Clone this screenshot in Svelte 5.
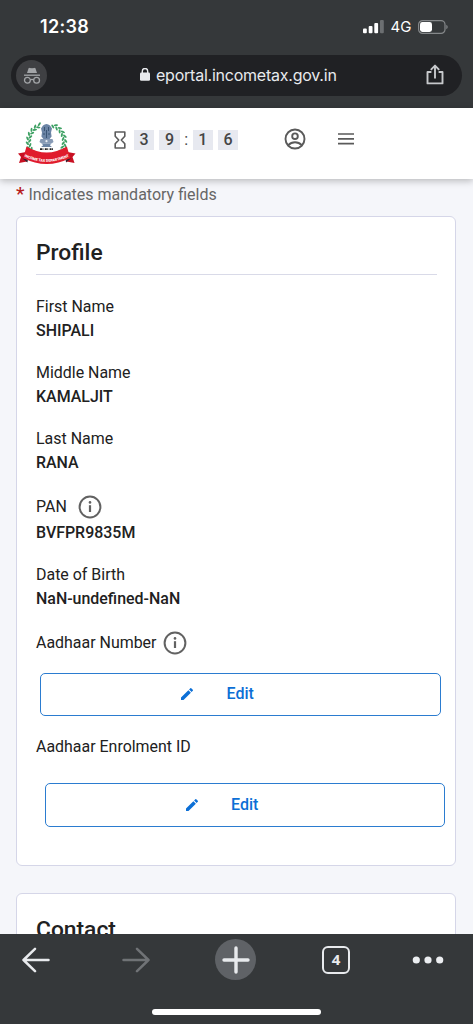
<script>
  const timer = ['3', '9', ':', '1', '6'];
  const fields = [
    { label: 'First Name', value: 'SHIPALI' },
    { label: 'Middle Name', value: 'KAMALJIT' },
    { label: 'Last Name', value: 'RANA' },
    { label: 'PAN', value: 'BVFPR9835M', info: true, wide: true },
    { label: 'Date of Birth', value: 'NaN-undefined-NaN' },
    { label: 'Aadhaar Number', info: true },
  ];
  const wreath = Array.from({ length: 44 }, (_, i) => {
    const deg = -68 + i * 7.35;
    const r = (deg * Math.PI) / 180;
    const d = i % 2 ? 1.2 : -1.2;
    return { x: 28.5 + (18 + d) * Math.cos(r), y: 19.5 + (17.4 + d) * Math.sin(r), deg: deg + (i % 2 ? 55 : 125) };
  });
</script>

{#snippet infoIcon()}
  <svg class="info" width="24" height="24" viewBox="0 0 24 24" fill="none">
    <circle cx="12" cy="12" r="10.4" stroke="#626262" stroke-width="2" />
    <path d="M12 10.2v6.8" stroke="#626262" stroke-width="2.2" />
    <circle cx="12" cy="7.4" r="1.3" fill="#626262" />
  </svg>
{/snippet}

{#snippet editButton(extra)}
  <button class="edit {extra}">
    <svg width="16" height="16" viewBox="0 0 24 24" fill="#0c6fd6">
      <path d="M3 17.25V21h3.75L17.81 9.94l-3.75-3.75zM20.71 7.04a1 1 0 0 0 0-1.41l-2.34-2.34a1 1 0 0 0-1.41 0l-1.83 1.83 3.75 3.75z" />
    </svg>
    <span>Edit</span>
  </button>
{/snippet}

<div class="screen">
  <header class="browser">
    <div class="status">
      <span class="clock">12:38</span>
      <div class="signals">
        <svg width="21" height="14" viewBox="0 0 21 14" fill="#fff">
          <rect x="0" y="8.5" width="3.8" height="4.7" rx="1" />
          <rect x="5.7" y="6" width="3.8" height="7.2" rx="1" />
          <rect x="11.3" y="3" width="3.8" height="10.2" rx="1" />
          <rect x="17" y="0" width="3.8" height="13.2" rx="1" fill="#6c6f71" />
        </svg>
        <span class="net">4G</span>
        <svg width="30" height="14" viewBox="0 0 30 14">
          <rect x=".6" y=".6" width="26.4" height="12.8" rx="4" fill="none" stroke="#85888a" stroke-width="1.2" />
          <rect x="2" y="2" width="12" height="10" rx="2.4" fill="#fff" />
          <path d="M28.3 4.8q1.4.9 1.4 2.2t-1.4 2.2z" fill="#85888a" />
        </svg>
      </div>
    </div>
    <div class="address">
      <span class="incognito">
        <svg width="18" height="18" viewBox="0 0 18 18" fill="none" stroke="#a3a5a8">
          <path d="M4 6 5.5 1.4Q5.8.7 6.5.9L9 1.3l2.5-.4q.7-.2 1 .5L14 6z" fill="#a3a5a8" stroke="none" />
          <path d="M1 8.2h16" stroke-width="1.3" />
          <circle cx="4.4" cy="13.2" r="2.9" stroke-width="1.3" />
          <circle cx="13.6" cy="13.2" r="2.9" stroke-width="1.3" />
          <path d="M7.2 13q1.8-1.1 3.6 0" stroke-width="1.2" />
        </svg>
      </span>
      <div class="url">
        <svg width="10" height="13" viewBox="0 0 10 13">
          <rect x="0" y="4.5" width="10" height="8.2" rx="1.2" fill="#e8eaed" />
          <path d="M2.3 5V3.2a2.7 2.7 0 0 1 5.4 0V5" fill="none" stroke="#e8eaed" stroke-width="1.4" />
        </svg>
        <span>eportal.incometax.gov.in</span>
      </div>
      <svg class="share" width="18" height="22" viewBox="0 0 18 22" fill="none" stroke="#c7c9cc" stroke-width="1.9">
        <path d="M5.4 8H1.5v11.4h15V8h-3.9M9 14.4V2M4.8 5.8 9 1.6l4.2 4.2" stroke-linejoin="round" />
      </svg>
    </div>
  </header>

  <nav class="site">
    <svg class="logo" width="58" height="44" viewBox="0 0 58 44">
      {#each wreath as l}
        <ellipse cx={l.x} cy={l.y} rx="2.2" ry="1" fill="#3fa164" transform={`rotate(${l.deg} ${l.x} ${l.y})`} />
      {/each}
      <g fill="#6b84a5">
        <path d="M25 3.5q3.5-3 7 0l2 3-1 4 .6 4-2 2.500h-6.200l-2-2.500.6-4-1-4z" />
        <path d="M22.500 17h12l1 3-2 1.500H23.500l-2-1.500z" fill="#879ab5" />
        <path d="M24 21.500h9l-1 2 2 1.400H23l2-1.400z" />
      </g>
      <path d="M26.500 5v4m4-4v4M25 12h2m3 0h2M28.500 8v8" stroke="#34506f" stroke-width=".9" />
      <circle cx="28.500" cy="19.200" r="1.100" fill="#e9eef5" />
      <path d="M22 27.200h3.400m1.400 0h3.400m1.400 0h3.400" stroke="#222" stroke-width="1.700" stroke-dasharray="2 .5" />
      <path d="M8 30 0 31.500l3 3.400L1 41l8-1.400zM49.500 30l8 1.500-3 3.400 2 6.100-8-1.400z" fill="#c81022" />
      <path d="M4.500 36.500l5.500 1-.6 3zM53 36.500l-5.500 1 .6 3z" fill="#3a2230" />
      <path d="M8.500 24.500q20.200 12 40.400 0l3.300 11.500q-23.500 12-47 0z" fill="#e01b2c" />
      <path id="ribbon" d="M6.500 34.600q22 10.400 44.400 0" fill="none" />
      <text class="ribbon-text" text-anchor="middle"><textPath href="#ribbon" startOffset="50%">INCOME TAX DEPARTMENT</textPath></text>
    </svg>
    <div class="timer">
      <svg width="12" height="18" viewBox="0 0 12 18" fill="none" stroke="#5c5c5c" stroke-width="1.6" stroke-linejoin="round">
        <path d="M1.200 1h9.600v4.200L7.300 9l3.500 3.800V17H1.200v-4.200L4.700 9 1.200 5.200z" />
      </svg>
      <div class="digits">
        {#each timer as t}
          <span class:colon={t === ':'}>{t}</span>
        {/each}
      </div>
    </div>
    <svg class="user" width="22" height="22" viewBox="0 0 22 22" fill="none" stroke="#5a5a5a" stroke-width="1.900">
      <circle cx="11" cy="11" r="9.500" />
      <circle cx="11" cy="8.200" r="2.800" />
      <path d="M4.300 17.200q2.700-2.900 6.700-2.900t6.700 2.900" />
    </svg>
    <svg class="menu" width="16" height="12" viewBox="0 0 16 12" stroke="#5a5a5a" stroke-width="1.700">
      <path d="M0 1h16M0 5.800h16M0 10.600h16" />
    </svg>
  </nav>

  <main>
    <p class="mandatory"><b>*</b> Indicates mandatory fields</p>
    <section class="card profile">
      <h2>Profile</h2>
      {#each fields as f}
        <div class="field">
          <div class="label" class:tall={f.info} class:wide={f.wide}>
            <span>{f.label}</span>
            {#if f.info}{@render infoIcon()}{/if}
          </div>
          {#if f.value}<div class="value">{f.value}</div>{/if}
        </div>
      {/each}
      {@render editButton('first')}
      <div class="label enrol">Aadhaar Enrolment ID</div>
      {@render editButton('second')}
    </section>
    <section class="card contact">
      <h2>Contact</h2>
    </section>
  </main>

  <footer>
    <div class="tools">
      <svg width="28" height="26" viewBox="0 0 28 26" fill="none" stroke="#e8eaed" stroke-width="2.500" stroke-linecap="round" stroke-linejoin="round">
        <path d="M26.500 13H1.500M13 1.800 1.500 13 13 24.200" />
      </svg>
      <svg class="forward" width="28" height="26" viewBox="0 0 28 26" fill="none" stroke="#707376" stroke-width="2.500" stroke-linecap="round" stroke-linejoin="round">
        <path d="M1.500 13h25M15 1.800 26.500 13 15 24.200" />
      </svg>
      <span class="plus">
        <svg width="28" height="28" viewBox="0 0 28 28" stroke="#e8eaed" stroke-width="3.400" stroke-linecap="round">
          <path d="M14 2v24M2 14h24" />
        </svg>
      </span>
      <span class="tabs">4</span>
      <svg class="more" width="32" height="8" viewBox="0 0 32 8" fill="#eceef1">
        <circle cx="4.300" cy="4" r="3.600" /><circle cx="16" cy="4" r="3.600" /><circle cx="27.700" cy="4" r="3.600" />
      </svg>
    </div>
    <div class="home"></div>
  </footer>
</div>

<style>
  :global(body) { margin: 0; background: #35383a; }
  .screen {
    width: 473px; height: 1024px; overflow: hidden;
    display: flex; flex-direction: column;
    font-family: Roboto, sans-serif; color: #212121; background: #f5f6fa;
  }
  .screen * { box-sizing: border-box; }
  svg { display: block; flex: none; }
  .browser { height: 108px; flex: none; background: #35383a; padding: 0 11px; }
  .status {
    height: 55px; padding: 0 14px 2px 29px; display: flex; justify-content: space-between; align-items: center;
    color: #fff; font-family: Inter, sans-serif;
  }
  .clock { font-size: 18px; font-weight: 600; line-height: 22px; letter-spacing: .3px; }
  .signals { display: flex; align-items: center; }
  .net { font-size: 15px; font-weight: 400; line-height: 20px; width: 34px; text-align: center; }
  .address {
    height: 41px; border-radius: 21px; background: #202124; display: flex; align-items: center;
    padding: 0 18px 0 5px; color: #e8eaed;
  }
  .incognito {
    width: 31px; height: 31px; border-radius: 50%; background: #3f4043;
    display: flex; align-items: center; justify-content: center;
  }
  .url {
    margin: -2px 0 0 93px; display: flex; align-items: center; gap: 6px;
    font: 400 16px/20px Inter, sans-serif; letter-spacing: -.23px;
  }
  .share { margin: -1px 0 0 auto; }

  .site {
    height: 71px; flex: none; background: #fff; position: relative; z-index: 1;
    box-shadow: 0 2px 7px rgba(0, 0, 0, .25); display: flex; align-items: flex-start; padding-left: 18px;
  }
  .logo { margin-top: 14px; }
  .ribbon-text { font-family: Roboto, sans-serif; font-size: 3.700px; font-weight: 900; fill: #fff; }
  .timer { margin: 22px 0 0 38px; display: flex; align-items: center; }
  .digits { display: flex; gap: 5px; margin-left: 8px; }
  .digits span {
    width: 20.300px; height: 20px; background: #e7e9f0; color: #454545;
    font-size: 16px; font-weight: 500; line-height: 20px; text-align: center;
  }
  .digits .colon { width: 3px; background: none; font-weight: 400; display: flex; justify-content: center; }
  .user { margin: 19.500px 0 0 45.800px; }
  .menu { margin: 25px 0 0 32px; }

  main { flex: 1; min-height: 0; overflow: hidden; padding: 0 17px 0 16px; }
  .mandatory { margin: 6px 0 0; font-size: 16px; line-height: 20px; color: #666; }
  .mandatory b { font-weight: 500; font-size: 19px; line-height: 16px; color: #b71c1c; }
  .card { background: #fff; border: 1.500px solid #d5d6e8; border-radius: 6px; padding: 0 18px 0 19px; }
  .profile { margin-top: 11px; height: 650px; }
  .contact { margin-top: 27px; height: 300px; }
  h2 {
    margin: 0 0 20px; padding-top: 20px; height: 58px; border-bottom: 1px solid #d9dae8;
    font-size: 22.800px; font-weight: 500; line-height: 32px;
  }
  .contact h2 { border: 0; }
  .field { margin-bottom: 18px; }
  .label, .value { font-size: 15.950px; line-height: 24px; height: 24px; display: flex; align-items: center; }
  .label.tall { height: 28px; gap: 7px; }
  .label.wide { gap: 11px; }
  .value { font-weight: 500; }
  .edit {
    width: 401px; height: 43px; display: flex; align-items: center; padding: 0 0 1px 138px; gap: 31.500px;
    border: 1.300px solid #2b7cd0; border-radius: 5px; background: #fff;
    font: 500 16px/24px Roboto, sans-serif; color: #0c6fd6;
  }
  .edit.first { margin: -2px 0 19px 4px; }
  .edit.second { width: 400px; margin: 24px 0 0 9px; height: 44px; padding: 0 0 1px 137.500px; }

  footer { height: 90px; flex: none; background: #35383a; padding-top: 5px; }
  .tools { display: flex; align-items: center; padding-left: 22px; height: 41px; }
  .forward { margin-left: 72px; }
  .plus {
    margin-left: 65px; width: 41px; height: 41px; border-radius: 50%; background: #5f6266;
    display: flex; align-items: center; justify-content: center;
  }
  .tabs {
    margin-left: 66px; width: 28px; height: 28px; border: 2.700px solid #e8eaed; border-radius: 6px; color: #e8eaed;
    font: 700 15px/23px "Open Sans", sans-serif; text-align: center;
  }
  .more { margin-left: 62px; }
  .home { width: 169px; height: 6px; border-radius: 3px; background: #fff; margin: 29px auto 0; }
</style>
